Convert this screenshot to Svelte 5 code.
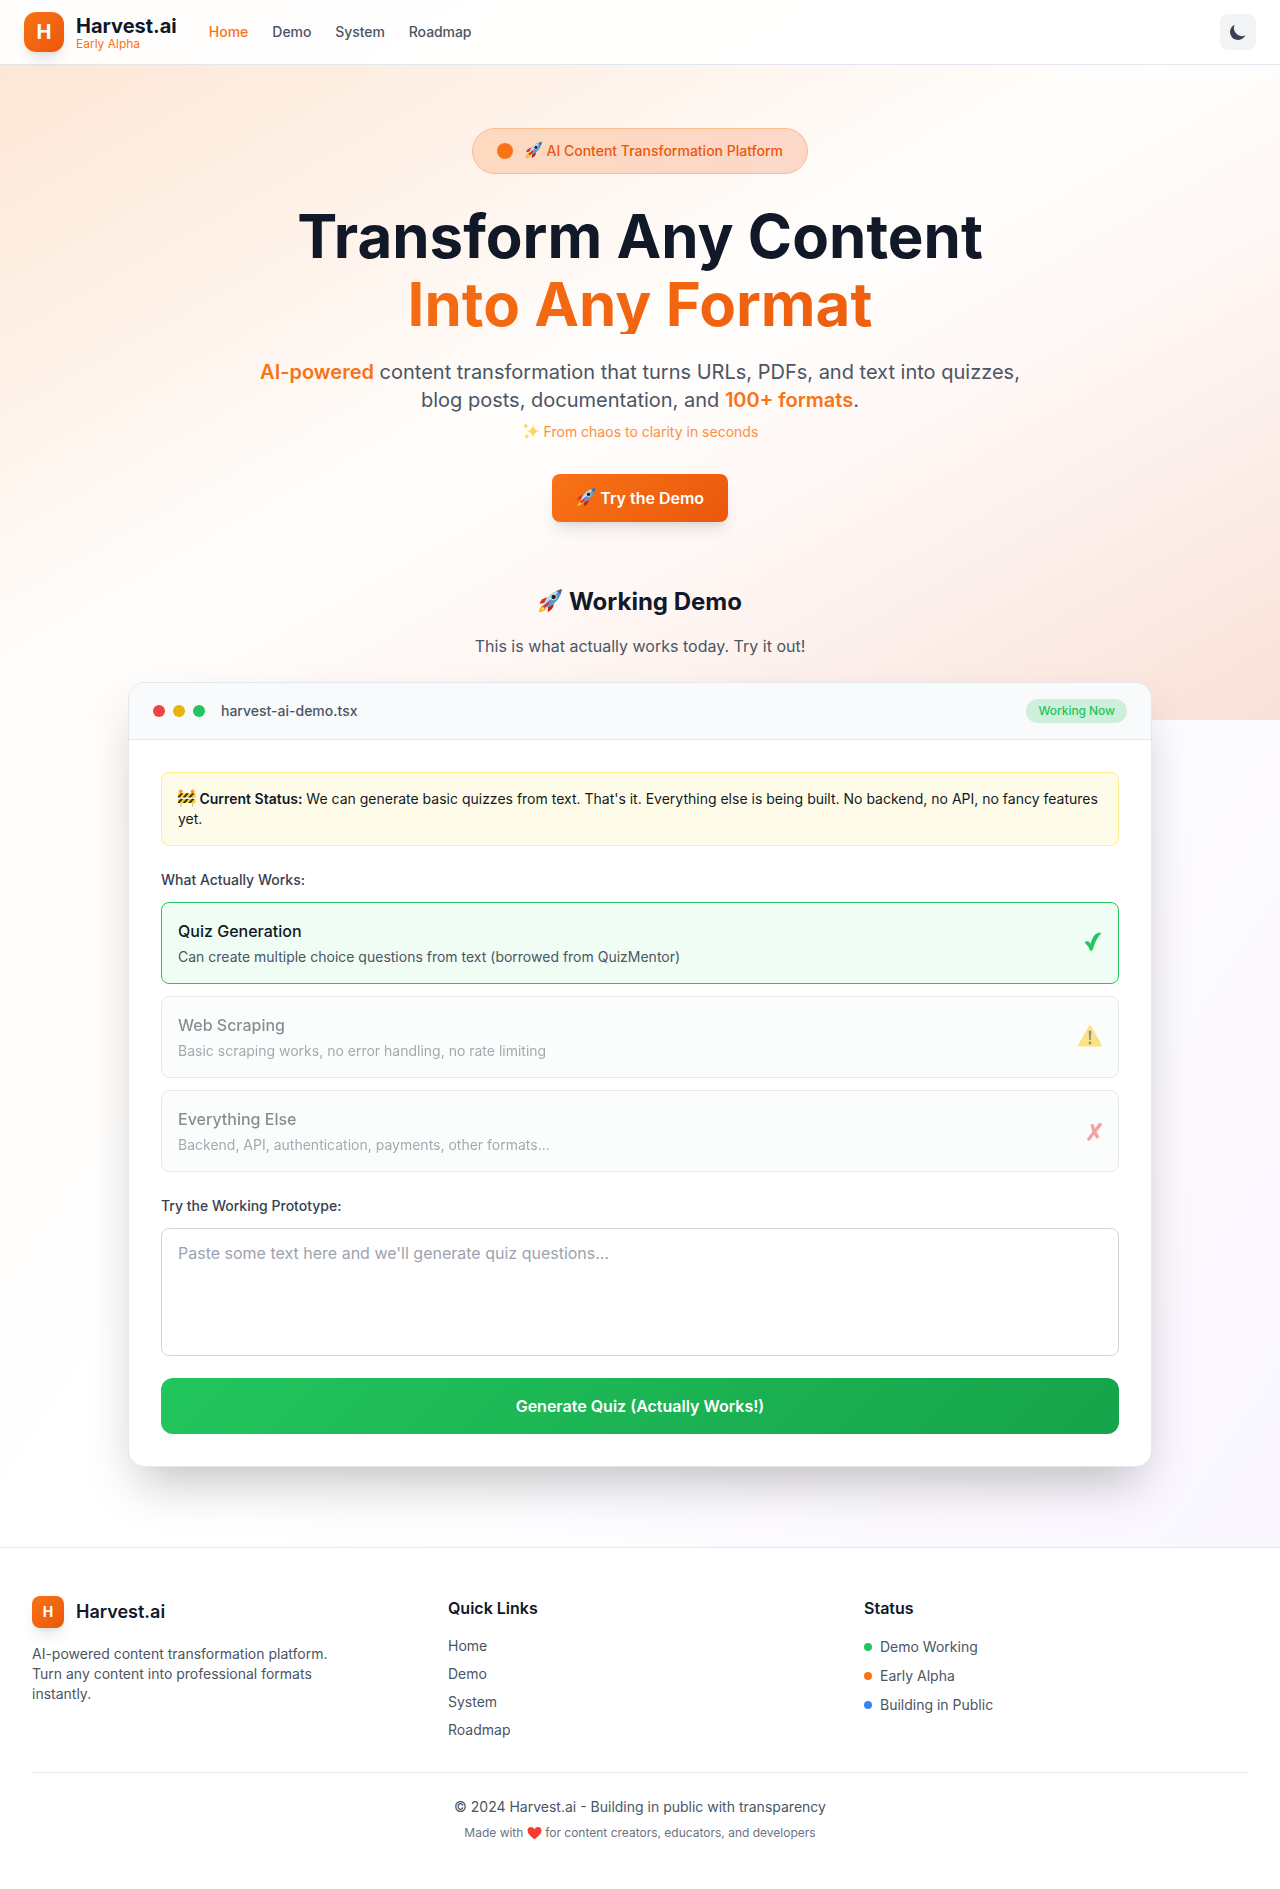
<script>
  const nav = ['Home', 'Demo', 'System', 'Roadmap'];
  const features = [
    { name: 'Quiz Generation', text: 'Can create multiple choice questions from text (borrowed from QuizMentor)', state: 'ok' },
    { name: 'Web Scraping', text: 'Basic scraping works, no error handling, no rate limiting', state: 'warn' },
    { name: 'Everything Else', text: 'Backend, API, authentication, payments, other formats...', state: 'off' }
  ];
  const statuses = [
    { label: 'Demo Working', tone: 'green' },
    { label: 'Early Alpha', tone: 'orange' },
    { label: 'Building in Public', tone: 'blue' }
  ];
</script>

{#snippet rocket()}
  <svg class="rocket" viewBox="0 0 20 20" aria-hidden="true">
    <path d="M5 12 1.2 12.6Q2.2 8.5 7.2 7.4Z" fill="#e0301e" />
    <path d="M8 15 7.6 19Q12 17.6 12.6 12.6Z" fill="#c81e1e" />
    <path d="M5.2 13.2Q2 13.6.8 19.2 6 18.4 7 15Z" fill="#fb8c00" />
    <path d="M5.2 14.2Q2.8 15 1.6 18.5 5 17.4 6 15.2Z" fill="#ffe64a" />
    <path d="M4.8 12.8Q8 3.4 19 .8 17.6 11.5 7.4 15.4Z" fill="#5b97c9" />
    <path d="M4.8 12.8Q8 3.4 19 .8 12 6.5 5.8 13.8Z" fill="#bcdcf2" />
    <path d="M14.8 2.4Q17 1.2 19 .8 18.6 3.2 17.7 5.2Z" fill="#3f6a96" />
    <circle cx="12.4" cy="7.2" r="2.5" fill="#d9e2ea" />
    <circle cx="12.4" cy="7.2" r="1.8" fill="#25242c" />
    <path d="M4 14.7 9.6 9.4 7.8 13.4 4.8 16Z" fill="#dc2a22" />
  </svg>
{/snippet}

<div class="page">
  <div class="glow"></div>

  <header class="topbar">
    <a class="brand" href="#home">
      <span class="mark">H</span>
      <span class="brand-text">
        <span class="brand-name">Harvest.ai</span>
        <span class="brand-tag">Early Alpha</span>
      </span>
    </a>
    <nav>
      {#each nav as item, i}
        <a href="#{item.toLowerCase()}" class:active={i === 0}>{item}</a>
      {/each}
    </nav>
    <button class="theme" aria-label="Toggle theme">
      <svg viewBox="0 0 20 20"><path d="M17.3 13.3A8 8 0 0 1 6.7 2.7a8 8 0 1 0 10.6 10.6Z" fill="#374151" /></svg>
    </button>
  </header>

  <main>
    <section class="hero">
      <div class="pill"><span class="pulse"></span><span>{@render rocket()} AI Content Transformation Platform</span></div>
      <h1>Transform Any Content<span>Into Any Format</span></h1>
      <p class="lead">
        <strong>AI-powered</strong> content transformation that turns URLs, PDFs, and text into quizzes, blog posts, documentation, and <strong>100+ formats</strong>.
      </p>
      <p class="tagline">
        <svg class="sparkles" viewBox="0 0 18 18" aria-hidden="true">
          <g fill="#fdd663">
            <path d="M11 2.2Q11.7 8.3 17 9.2 11.7 10.1 11 16.2 10.3 10.1 5 9.2 10.3 8.3 11 2.2Z" />
            <path d="M3.8 .8Q4.2 3.5 6.6 4 4.2 4.5 3.8 7.2 3.4 4.5 1 4 3.4 3.5 3.8 .8Z" />
            <path d="M4.8 11.6Q5.2 14 7.2 14.4 5.2 14.8 4.8 17.2 4.4 14.8 2.4 14.4 4.4 14 4.8 11.6Z" />
          </g>
        </svg>
        From chaos to clarity in seconds
      </p>
      <a class="cta" href="#demo">{@render rocket()} Try the Demo</a>
    </section>

    <section class="demo">
      <h2>{@render rocket()} Working Demo</h2>
      <p class="sub">This is what actually works today. Try it out!</p>

      <div class="window">
        <div class="window-bar">
          <i class="red"></i><i class="yellow"></i><i class="green"></i>
          <span class="file">harvest-ai-demo.tsx</span>
          <span class="badge">Working Now</span>
        </div>
        <div class="window-body">
          <div class="alert">
            <svg class="barrier" viewBox="0 0 18 18" aria-hidden="true">
              <path d="M2.2 4h1.4v14H2.2zM14.4 4h1.4v14h-1.4z" fill="#c4c4c4" />
              <path d="M0 4.2h18v4.4H0zM0 10h18v4.2H0z" fill="#f7cf2a" />
              <path d="M0 8.6V7.4L2.8 4.2h2.6L1.6 8.6zM4.8 8.6l3.8-4.4h2.6L7.4 8.6zM10.6 8.6l3.8-4.4H17l-3.8 4.4zM0 14.2v-1.2L2.6 10h2.6L1.6 14.2zM4.8 14.2 8.4 10H11l-3.6 4.2zM10.6 14.2l3.6-4.2h2.6l-3.6 4.2z" fill="#2c2a20" />
              <circle cx="2.9" cy="2.2" r="2" fill="#ff9d1e" />
              <circle cx="15.1" cy="2.2" r="2" fill="#ff9d1e" />
            </svg>
            <strong>Current Status:</strong> We can generate basic quizzes from text. That's it. Everything else is being built. No backend, no API, no fancy features yet.
          </div>

          <div class="label">What Actually Works:</div>
          <div class="features">
            {#each features as f}
              <div class="feature {f.state}">
                <div>
                  <div class="feature-name">{f.name}</div>
                  <div class="feature-text">{f.text}</div>
                </div>
                {#if f.state === 'ok'}
                  <svg class="check" viewBox="0 0 18 20"><path d="M.8 10.6Q2.6 8.8 4.4 9.6 5.7 10.4 6.4 12.4 9.6 2.2 13.6 1.2 15.6.6 17 1.2 12 6 8.6 17.4 7.6 19.2 6.4 18.6 4.6 13.6.8 10.6Z" fill="#22c55e" stroke="#22c55e" stroke-width=".4" /></svg>
                {:else if f.state === 'warn'}
                  <svg class="warning" viewBox="0 0 24 22"><path d="M10.8 1.2Q12 0 13.2 1.2L23.6 19.4Q24.2 21.2 22.6 21.4H1.4Q-.2 21.2.4 19.4Z" fill="#fdc70c" /><path d="M10.6 6Q12 4.8 13.4 6L12.8 15H11.2Z" fill="#20242d" /><circle cx="12" cy="18" r="1.4" fill="#20242d" /></svg>
                {:else}
                  <svg class="cross" viewBox="0 0 16 20"><path d="M4.6 2.8 7.4 2 9 6.8 12.6 1.6 15.4 1.2 15.8 3.2 10.4 9.8 13.4 15 10.6 16.6 8 12.6 4.2 18 2 18.8 1.4 16.6 6.6 9.8Z" fill="#ef4444" stroke="#ef4444" stroke-width=".3" stroke-linejoin="round" /></svg>
                {/if}
              </div>
            {/each}
          </div>

          <label class="label" for="source">Try the Working Prototype:</label>
          <textarea id="source" placeholder="Paste some text here and we'll generate quiz questions..."></textarea>
          <button class="generate">Generate Quiz (Actually Works!)</button>
        </div>
      </div>
    </section>
  </main>

  <footer>
    <div class="columns">
      <div>
        <div class="foot-brand"><span class="mark small">H</span><span>Harvest.ai</span></div>
        <p class="about">AI-powered content transformation platform. Turn any content into professional formats instantly.</p>
      </div>
      <div>
        <h3>Quick Links</h3>
        <ul class="links">
          {#each nav as item}<li><a href="#{item.toLowerCase()}">{item}</a></li>{/each}
        </ul>
      </div>
      <div>
        <h3>Status</h3>
        <ul class="statuses">
          {#each statuses as s}<li><i class={s.tone}></i>{s.label}</li>{/each}
        </ul>
      </div>
    </div>
    <div class="legal">
      <p>© 2024 Harvest.ai - Building in public with transparency</p>
      <p class="made">
        Made with
        <svg class="heart" viewBox="0 0 16 14" aria-hidden="true"><path d="M8 13.6Q.6 8.6.6 4.4.6.6 4.2.6 6.8.6 8 3 9.2.6 11.8.6q3.6 0 3.6 3.8Q15.4 8.6 8 13.6Z" fill="#fb3a2e" /></svg>
        for content creators, educators, and developers
      </p>
    </div>
  </footer>
</div>

<style>
  :global(body) { margin: 0; }
  .page, .page * { box-sizing: border-box; }
  .page {
    position: relative;
    min-height: 1889px;
    font-family: Inter, "Liberation Sans", sans-serif;
    font-size: 16px;
    line-height: 24px;
    color: #111827;
    background: linear-gradient(to bottom right, #fffdfb 0%, #ffffff 50%, #f8f4fe 100%);
    display: flex;
    flex-direction: column;
  }
  a { color: inherit; text-decoration: none; }
  h1, h2, h3, p, ul { margin: 0; padding: 0; }
  ul { list-style: none; }
  button { font: inherit; border: 0; }
  svg { display: inline-block; flex: none; }

  /* Warm wash behind the first screen */
  .glow {
    position: absolute;
    inset: 0 0 auto;
    height: 720px;
    background: linear-gradient(to bottom right, #fde4d1 0%, #fffefd 50%, #fef5f2 70%, #f9e1d8 100%);
  }
  .topbar {
    position: relative;
    height: 65px;
    padding: 0 24px;
    display: flex;
    align-items: center;
    background: rgba(255, 255, 255, 0.95);
    border-bottom: 1px solid #e2e6ee;
  }
  .brand { display: flex; align-items: center; gap: 12px; }
  .mark {
    width: 40px;
    height: 40px;
    border-radius: 12px;
    display: grid;
    place-items: center;
    color: #fff;
    font-weight: 700;
    font-size: 20px;
    background: linear-gradient(135deg, #f97316, #ea580c);
    box-shadow: 0 10px 15px -3px rgba(0, 0, 0, 0.1), 0 4px 6px -4px rgba(0, 0, 0, 0.1);
  }
  .brand-text { display: flex; flex-direction: column; padding-top: 4px; }
  .brand-name { font-size: 20px; line-height: 20px; font-weight: 700; }
  .brand-tag { font-size: 12px; line-height: 16px; color: #f97316; }
  nav { display: flex; gap: 24px; margin-left: 32px; font-size: 14px; font-weight: 500; letter-spacing: -0.005em; color: #4b5563; }
  nav .active { color: #f97316; letter-spacing: 0; }
  .theme {
    margin-left: auto;
    width: 36px;
    height: 36px;
    padding: 0;
    display: grid;
    place-items: center;
    border-radius: 8px;
    background: #f3f4f6;
  }
  .theme svg { width: 20px; height: 20px; }

  main { position: relative; padding-bottom: 80px; }
  .hero { padding-top: 63px; display: flex; flex-direction: column; align-items: center; text-align: center; }
  .pill {
    height: 46px;
    padding: 0 24px;
    display: flex;
    align-items: center;
    gap: 12px;
    border: 1px solid #fdba8c;
    border-radius: 23px;
    background: linear-gradient(90deg, #fdd9c0, #fbd8c8);
    color: #ea580c;
    font-size: 14px;
    line-height: 20px;
    font-weight: 500;
  }
  .pulse { width: 16px; height: 16px; border-radius: 50%; background: #f97316; }
  .rocket { width: 1.27em; height: 1.27em; margin-top: -0.3em; vertical-align: -0.22em; }
  h2 .rocket { width: 1.05em; height: 1.05em; vertical-align: -0.14em; }
  h1 {
    margin-top: 32px;
    width: 896px;
    font-size: 60px;
    line-height: 1;
    font-weight: 700;
  }
  h1 span {
    display: block;
    margin-top: 8px;
    color: transparent;
    background: linear-gradient(135deg, #f97316, #ea580c);
    background-clip: text;
    -webkit-background-clip: text;
  }
  .lead { margin-top: 24px; width: 768px; font-size: 20px; line-height: 28px; color: #4b5563; }
  .lead strong { color: #f97316; font-weight: 600; }
  .tagline { margin-top: 8px; font-size: 14px; line-height: 20px; color: #fb8f3f; }
  .sparkles { width: 18px; height: 18px; margin-top: -4px; vertical-align: -3px; }
  .cta {
    margin-top: 32px;
    height: 48px;
    padding: 0 24px;
    border-radius: 8px;
    line-height: 48px;
    color: #fff;
    font-weight: 600;
    background: linear-gradient(135deg, #f97316, #ea580c);
    box-shadow: 0 10px 15px -3px rgba(0, 0, 0, 0.1), 0 4px 6px -4px rgba(0, 0, 0, 0.1);
  }

  .demo { padding-top: 64px; text-align: center; }
  h2 { font-size: 24px; line-height: 32px; font-weight: 700; }
  .sub { margin-top: 16px; color: #4b5563; }
  .window {
    width: 1024px;
    margin: 24px auto 0;
    text-align: left;
    background: #fff;
    border: 1px solid #e5e7eb;
    border-radius: 16px;
    overflow: hidden;
    box-shadow: 0 25px 50px -12px rgba(0, 0, 0, 0.25);
  }
  .window-bar {
    height: 57px;
    padding: 0 24px;
    display: flex;
    align-items: center;
    gap: 8px;
    background: #f9fafb;
    border-bottom: 1px solid #e5e7eb;
  }
  i { width: 12px; height: 12px; border-radius: 50%; flex: none; }
  .red { background: #ef4444; }
  .yellow { background: #eab308; }
  .green { background: #22c55e; }
  .orange { background: #f97316; }
  .blue { background: #3b82f6; }
  .file { margin-left: 8px; font-size: 14px; line-height: 20px; font-weight: 500; color: #4b5563; }
  .badge {
    margin-left: auto;
    padding: 4px 12px;
    border-radius: 12px;
    background: #cef0db;
    color: #22c55e;
    font-size: 12px;
    line-height: 16px;
    font-weight: 500;
    letter-spacing: -0.005em;
  }
  .window-body { padding: 32px; }
  .alert {
    padding: 16px;
    border: 1px solid #fef08a;
    border-radius: 8px;
    background: #fefce8;
    font-size: 14px;
    line-height: 20px;
  }
  .alert strong { font-weight: 600; }
  .barrier { width: 17.5px; height: 18px; margin-top: -4px; vertical-align: -3px; }
  .label { display: block; margin-top: 24px; font-size: 14px; line-height: 20px; font-weight: 500; color: #374151; }
  .features { margin-top: 12px; display: flex; flex-direction: column; gap: 12px; }
  .feature {
    height: 82px;
    padding: 0 16px;
    display: flex;
    align-items: center;
    justify-content: space-between;
    border: 1px solid #d1d5db;
    border-radius: 8px;
    background: #f9fafb;
  }
  .feature.ok { border-color: #22c55e; background: #f0fdf4; }
  .feature.warn, .feature.off { opacity: 0.5; }
  .feature-name { font-weight: 500; }
  .feature-text { margin-top: 4px; font-size: 14px; line-height: 20px; color: #4b5563; }
  .check { width: 18px; height: 20px; margin-bottom: 2px; }
  .warning { width: 24px; height: 22px; margin-bottom: 2px; }
  .cross { width: 16px; height: 20px; margin-top: 1px; }
  textarea {
    display: block;
    width: 100%;
    height: 128px;
    margin-top: 12px;
    padding: 12px 16px;
    border: 1px solid #d1d5db;
    border-radius: 8px;
    background: #fff;
    font: inherit;
    resize: none;
  }
  textarea::placeholder { color: #9ca3af; }
  .generate {
    display: block;
    width: 100%;
    height: 56px;
    margin-top: 22px;
    border-radius: 12px;
    color: #fff;
    font-weight: 600;
    background: linear-gradient(135deg, #22c55e, #16a34a);
  }

  footer { position: relative; flex: 1; padding: 48px 32px 0; background: #fff; border-top: 1px solid #e5e7eb; }
  .columns { display: grid; grid-template-columns: repeat(3, 1fr); gap: 32px; }
  .foot-brand { display: flex; align-items: center; gap: 12px; font-size: 18px; line-height: 28px; font-weight: 600; }
  .mark.small { width: 32px; height: 32px; border-radius: 8px; font-size: 14px; }
  .about { margin-top: 16px; width: 320px; font-size: 14px; line-height: 20px; color: #4b5563; }
  h3 { font-size: 16px; line-height: 24px; font-weight: 600; }
  .links { margin-top: 16px; font-size: 14px; line-height: 20px; color: #4b5563; display: grid; gap: 8px; }
  .statuses { margin-top: 17px; font-size: 14px; line-height: 20px; color: #4b5563; display: grid; gap: 9px; align-content: start; }
  .statuses li { display: flex; align-items: center; gap: 8px; }
  .statuses i { width: 8px; height: 8px; }
  .legal { margin-top: 32px; padding-top: 24px; border-top: 1px solid #e5e7eb; text-align: center; font-size: 14px; line-height: 20px; color: #4b5563; }
  .made { margin-top: 8px; font-size: 12px; line-height: 16px; color: #6b7280; }
  .heart { width: 15px; height: 14px; margin-top: -2px; vertical-align: -3px; }
</style>
